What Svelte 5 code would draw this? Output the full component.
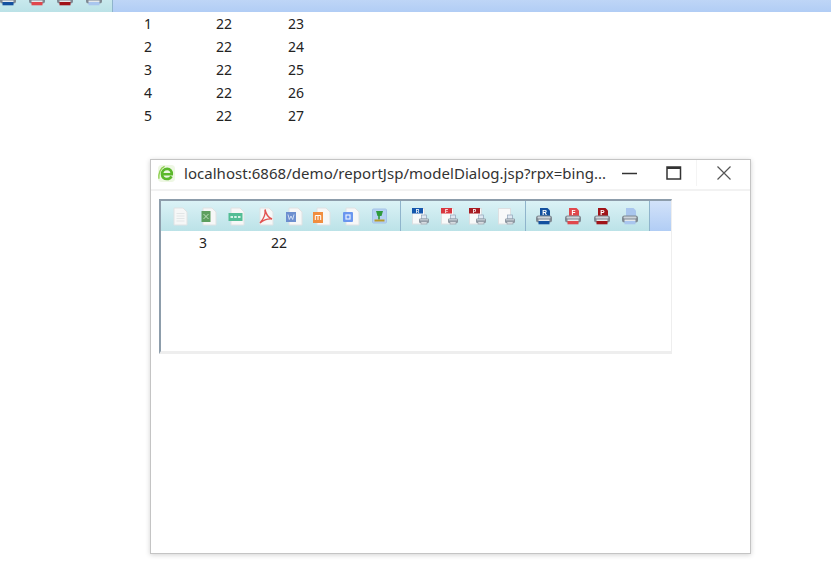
<script>
	const rows = [
		[1, 22, 23],
		[2, 22, 24],
		[3, 22, 25],
		[4, 22, 26],
		[5, 22, 27]
	];

	const exportIcons = ['blank', 'excel', 'csv', 'pdf', 'word', 'ofd', 'odt', 'image'];
	const pagePrint = [
		{ color: '#1557ad', letter: 'R' },
		{ color: '#d9363e', letter: 'F' },
		{ color: '#a81a20', letter: 'P' },
		{ color: '', letter: '' }
	];
	const directPrint = [
		{ color: '#12509f', letter: 'R' },
		{ color: '#e0474c', letter: 'F' },
		{ color: '#a01318', letter: 'P' },
		{ color: '#a9c6ee', letter: '' }
	];
	// only the bottom of these shows in the strip, so no letters there
	const stripPrint = directPrint.map((p) => ({ ...p, letter: '' }));
</script>

{#snippet exportIcon(kind)}
	<svg class="icon" viewBox="0 0 20 20" width="20" height="20">
		{#if kind === 'image'}
			<rect x="3.500" y="3" width="14" height="14" rx="1" fill="#b6d2f3" stroke="#a5c3e8" />
			<path d="M7 5h7l-1.500 5h-1.700v3.500H9.200V10H8.500z" fill="#2f9a3c" />
			<rect x="5.500" y="13.500" width="10" height="2" fill="#b59a2c" />
		{:else}
			<path d="M5 2h9l4 4v13H5z" fill="#f6f7f7" stroke="#dfe2e3" />
			{#if kind === 'blank'}
				<path d="M7.500 7.500h8M7.500 10h8M7.500 12.500h8M7.500 15h8" stroke="#e3e6e7" />
			{:else if kind === 'excel'}
				<rect x="3.500" y="5" width="9" height="11" fill="#5d9f5e" />
				<path d="M5.500 8l5 5M10.500 8l-5 5" stroke="#bfe0bf" stroke-width="1" />
			{:else if kind === 'csv'}
				<rect x="2.500" y="7" width="14" height="8" fill="#53bd95" />
				<path d="M4.500 11h2.500M8.200 11h2.500M12 11h2.500" stroke="#d6f3e8" stroke-width="2" />
			{:else if kind === 'pdf'}
				<path d="M10 3.500c1 5 3 8 7 9.500-4-.4-8 .6-12 4 3.500-4 6-8 5-13.500z" fill="none" stroke="#e2514f" stroke-width="1.400" />
			{:else if kind === 'word'}
				<rect x="2" y="6" width="10" height="10" fill="#6d8fcf" />
				<path d="M4 8.500l1.300 5 1.700-3.500 1.700 3.500 1.300-5" fill="none" stroke="#dbe6f7" stroke-width="0.900" />
			{:else if kind === 'ofd'}
				<rect x="1" y="6" width="10" height="11" fill="#f18d3e" />
				<path d="M3.300 14V9.500h5.400V14M6 9.500V14" fill="none" stroke="#fff" stroke-width="1" />
			{:else if kind === 'odt'}
				<rect x="2" y="6" width="10" height="10" rx="1" fill="#6a96ef" />
				<rect x="5" y="9" width="4" height="4" fill="none" stroke="#e8f0fe" stroke-width="1.200" />
			{/if}
		{/if}
	</svg>
{/snippet}

{#snippet pageIcon(item)}
	<svg class="icon" viewBox="0 0 20 20" width="20" height="20">
		<rect x="2.500" y="2.500" width="12" height="15.500" fill="#f8f9f9" stroke="#dde0e2" />
		{#if item.color}
			<rect x="2" y="2" width="11" height="5.500" fill={item.color} />
			<text x="7.500" y="6.800" class="mark">{item.letter}</text>
		{/if}
		<rect x="11.500" y="9" width="5" height="4" fill="#dfe8f2" stroke="#8fa3b8" stroke-width="0.700" />
		<rect x="9" y="12.500" width="10" height="4.500" rx="1.200" fill="#8e98a2" />
		<rect x="10" y="13.200" width="8" height="1.200" fill="#c8d0d7" />
		<rect x="11" y="15.800" width="6" height="2.200" fill="#dfe4e8" stroke="#8e98a2" stroke-width="0.600" />
	</svg>
{/snippet}

{#snippet printerIcon(item)}
	<svg class="icon" viewBox="0 0 20 20" width="20" height="20">
		<path d="M6 2h7.500l2.500 2.500V11H6z" fill={item.color} />
		{#if item.letter}
			<text x="10.500" y="8.500" class="mark big">{item.letter}</text>
		{/if}
		<rect x="2" y="9.500" width="16" height="7" rx="2.500" fill="#7f8992" />
		<rect x="3.500" y="10.500" width="13" height="2" rx="1" fill="#ccd4da" />
		<rect x="4.500" y="14.800" width="11" height="3.500" fill={item.color} />
		<rect x="4.500" y="13.500" width="11" height="1.500" fill="#e4e8eb" />
	</svg>
{/snippet}

{#snippet printGroup(items)}
	<div class="group last">
		{#each items as item}
			<span class="btn">{@render printerIcon(item)}</span>
		{/each}
	</div>
{/snippet}

<div class="page">
	<div class="strip">
		<div class="toolbar">
			{@render printGroup(stripPrint)}
			<div class="fill"></div>
		</div>
	</div>

	<table class="data">
		<tbody>
			{#each rows as row}
				<tr>
					{#each row as cell}
						<td>{cell}</td>
					{/each}
				</tr>
			{/each}
		</tbody>
	</table>

	<div class="dialog">
		<div class="titlebar">
			<svg class="ie" viewBox="0 0 20 20" width="19" height="19">
				<rect x="1" y="1" width="18" height="18" rx="4" fill="#eef7e4" />
				<path d="M5.500 10.800h10c.3-3.400-1.800-5.600-4.800-5.600-3.200 0-5.400 2.400-5.400 5.600 0 3 2.100 5 5.100 5 2.200 0 3.900-1 4.900-2.800" fill="none" stroke="#5cb82c" stroke-width="2.800" />
				<path d="M8 2.500C3.500 4 1.500 10 2 15.500" fill="none" stroke="#8ed04f" stroke-width="1.400" />
			</svg>
			<span class="title">localhost:6868/demo/reportJsp/modelDialog.jsp?rpx=bing...</span>
			<div class="controls">
				<span class="ctl">
					<svg viewBox="0 0 16 16" width="16" height="16"><path d="M0 8.500h15" stroke="#333" stroke-width="1.500" /></svg>
				</span>
				<span class="ctl">
					<svg viewBox="0 0 16 16" width="16" height="16"><rect x="1" y="2" width="13.500" height="12" fill="none" stroke="#333" stroke-width="1.500" /><path d="M1 3h13.500" stroke="#333" stroke-width="2" /></svg>
				</span>
				<span class="ctl close">
					<svg viewBox="0 0 16 16" width="16" height="16"><path d="M1.500 1.500l13 13M14.500 1.500l-13 13" stroke="#555" stroke-width="1.200" /></svg>
				</span>
			</div>
		</div>

		<div class="frame">
			<div class="toolbar">
				<div class="group first">
					{#each exportIcons as kind}
						<span class="btn">{@render exportIcon(kind)}</span>
					{/each}
				</div>
				<div class="group">
					{#each pagePrint as item}
						<span class="btn">{@render pageIcon(item)}</span>
					{/each}
				</div>
				{@render printGroup(directPrint)}
				<div class="fill"></div>
			</div>
			<div class="result">
				<span>3</span>
				<span>22</span>
			</div>
		</div>
	</div>
</div>

<style>
	:global(body) {
		background: #fff;
		font-family: "Noto Sans", "Open Sans", sans-serif;
		color: #222;
	}

	.page {
		height: 569px;
		overflow: hidden;
	}

	.strip {
		height: 12px;
		overflow: hidden;
	}

	.strip .toolbar {
		margin: -18px 0 0 -10px;
	}

	.toolbar {
		display: flex;
		height: 30px;
		background: linear-gradient(#dbf2f6, #bbe2e7);
	}

	.group {
		display: flex;
		align-items: center;
		box-sizing: border-box;
		padding: 0 5px;
		border-right: 1px solid #8fb4cc;
	}

	.group.first {
		padding: 0 6px 0 4px;
	}

	.group.last {
		padding: 0 4px;
	}

	.btn {
		display: flex;
		justify-content: center;
		width: 28.6px;
		margin-top: -1px;
	}

	.icon {
		filter: blur(0.4px);
	}

	.mark {
		font-family: "Liberation Sans", sans-serif;
		font-size: 5px;
		font-weight: 700;
		fill: #fff;
		text-anchor: middle;
	}

	.mark.big {
		font-size: 6.5px;
	}

	.fill {
		flex: 1;
		background: linear-gradient(#d2e2f9, #b1cdf5);
	}

	.data {
		border-collapse: collapse;
		margin-left: 144px;
		font-size: 14px;
	}

	.data td {
		width: 72px;
		height: 23px;
		padding: 0;
	}

	.dialog {
		width: 601px;
		height: 395px;
		box-sizing: border-box;
		margin: 32px 0 0 150px;
		background: #fff;
		border: 1px solid #c4c4c4;
		box-shadow: 0 1px 5px rgba(0, 0, 0, 0.18);
	}

	.titlebar {
		display: flex;
		align-items: center;
		box-sizing: border-box;
		height: 31px;
		padding: 0 0 3px 6px;
		border-bottom: 2px solid #f2f2f2;
	}

	.ie {
		flex-shrink: 0;
	}

	.title {
		margin-left: 8px;
		font-size: 15px;
		letter-spacing: 0.035px;
		color: #333;
		white-space: nowrap;
		flex: 1;
		overflow: hidden;
	}

	.controls {
		display: flex;
		align-self: stretch;
	}

	.ctl {
		display: flex;
		align-items: center;
		justify-content: center;
		width: 44px;
	}

	.ctl.close {
		width: 53px;
		border-left: 1px solid #f4f4f4;
	}

	.frame {
		width: 513px;
		height: 155px;
		box-sizing: border-box;
		margin: 8px 0 0 8px;
		border-top: 2px solid #8d9dab;
		border-left: 2px solid #8d9dab;
		border-right: 1px solid #eee;
		border-bottom: 3px solid #eee;
	}

	.result {
		display: grid;
		grid-template-columns: 72px 72px;
		padding-left: 38px;
		height: 23px;
		align-items: center;
		font-size: 14px;
	}
</style>
